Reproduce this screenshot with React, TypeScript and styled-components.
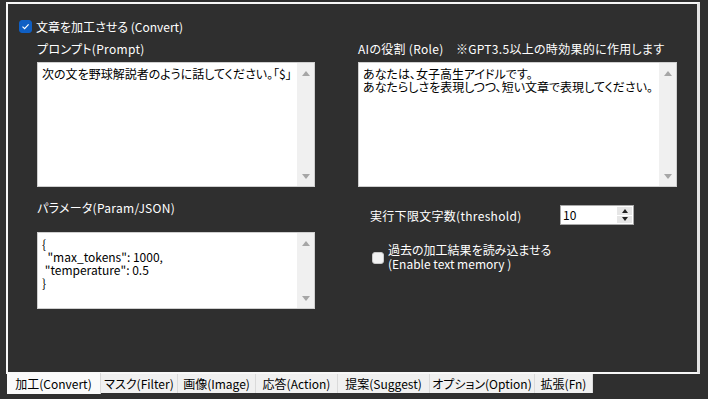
import React from 'react';
import styled, { createGlobalStyle } from 'styled-components';

const GlobalStyle = createGlobalStyle`
  html, body {
    margin: 0;
    padding: 0;
    background: #2f2f2f;
  }
  body {
    font-family: "Noto Sans CJK JP", "Noto Sans", sans-serif;
    font-size: 12px;
    line-height: 13px;
    font-feature-settings: "palt";
    color: #ffffff;
  }
  * {
    box-sizing: border-box;
  }
`;

const Window = styled.div`
  width: 708px;
  height: 399px;
  padding: 2px 8px 0 6px;
  display: flex;
  flex-direction: column;
`;

const Pane = styled.div`
  height: 372px;
  border: 2px solid #f7f7f7;
  border-right: 3px solid #e4e4e4;
  padding: 16px 0 0 11px;
`;

const CheckRow = styled.label`
  display: flex;
  align-items: center;
  gap: 4px;
  height: 13px;
`;

const CheckBox = styled.span<{ $checked: boolean }>`
  width: 13px;
  height: 13px;
  border-radius: 3px;
  display: flex;
  align-items: center;
  justify-content: center;
  flex-shrink: 0;
  background: ${(p) => (p.$checked ? '#0f5fc4' : '#f2f2f2')};
  border: 1px solid ${(p) => (p.$checked ? '#0f5fc4' : '#c9c9c9')};
`;

const Grid = styled.div`
  display: grid;
  grid-template-columns: 278px 319px;
  column-gap: 43px;
  row-gap: 14px;
  margin: 9px 0 0 18px;
`;

const Field = styled.div<{ $gap: number }>`
  display: flex;
  flex-direction: column;
  gap: ${(p) => p.$gap}px;
`;

const FieldLabel = styled.div`
  height: 13px;
  white-space: nowrap;
  letter-spacing: 0.3px;
`;

const TextBox = styled.div<{ $height: number }>`
  display: flex;
  height: ${(p) => p.$height}px;
  background: #ffffff;
  border: 1px solid #cfcfcf;
`;

const TextContent = styled.div`
  flex: 1;
  padding: 4px 4px;
  color: #000000;
  white-space: pre-wrap;
`;

const ScrollBar = styled.div`
  width: 17px;
  background: #f0f0f0;
  display: flex;
  flex-direction: column;
  align-items: center;
  justify-content: space-between;
  padding: 8px 0 7px;
`;

const Arrow = styled.span<{ $down?: boolean; $color?: string; $size?: number }>`
  width: 0;
  height: 0;
  border-left: ${(p) => p.$size ?? 4}px solid transparent;
  border-right: ${(p) => p.$size ?? 4}px solid transparent;
  ${(p) =>
    p.$down
      ? `border-top: ${(p.$size ?? 4) + 1}px solid ${p.$color ?? '#a6a6a6'};`
      : `border-bottom: ${(p.$size ?? 4) + 1}px solid ${p.$color ?? '#a6a6a6'};`}
`;

const Options = styled.div`
  display: flex;
  flex-direction: column;
`;

const ThresholdRow = styled.div`
  display: flex;
  align-items: center;
  margin-top: 4px;
  padding-left: 12px;
`;

const ThresholdLabel = styled.span`
  width: 190px;
  letter-spacing: 0.3px;
`;

const SpinBox = styled.div`
  width: 74px;
  height: 20px;
  display: flex;
  background: #ffffff;
  border: 1px solid #a9a9a9;
`;

const SpinValue = styled.span`
  flex: 1;
  color: #000000;
  padding-left: 2px;
  line-height: 18px;
`;

const SpinButtons = styled.div`
  width: 15px;
  margin: 1px 1px 1px 0;
  display: flex;
  flex-direction: column;
  gap: 1px;
`;

const SpinButton = styled.div`
  flex: 1;
  background: #e6e6e6;
  display: flex;
  align-items: center;
  justify-content: center;
`;

const MemoryRow = styled.label`
  display: flex;
  align-items: center;
  gap: 4px;
  margin-top: 18px;
  padding-left: 14px;
`;

const MemoryText = styled.span`
  line-height: 14px;
`;

const MemoryCheck = styled(CheckBox)`
  width: 12px;
  height: 12px;
  margin-top: 2px;
`;

const TabBar = styled.div`
  display: flex;
  align-items: flex-start;
  margin-left: 1px;
`;

const Tab = styled.div<{ $width: number; $active?: boolean }>`
  width: ${(p) => p.$width}px;
  height: ${(p) => (p.$active ? 21 : 19)}px;
  margin-top: ${(p) => (p.$active ? -1 : 0)}px;
  background: ${(p) => (p.$active ? '#fafafa' : '#f0f0f0')};
  border-right: 1px solid #dadada;
  color: #000000;
  display: flex;
  align-items: center;
  justify-content: center;
  white-space: nowrap;
`;

const CheckMark = () => (
  <svg width="9" height="9" viewBox="0 0 9 9">
    <path d="M1.5 4.6 L3.6 6.6 L7.6 2.4" fill="none" stroke="#ffffff" strokeWidth="1.2" />
  </svg>
);

const ScrollText: React.FC<{ height: number; text: string }> = ({ height, text }) => (
  <TextBox $height={height}>
    <TextContent>{text}</TextContent>
    <ScrollBar>
      <Arrow />
      <Arrow $down />
    </ScrollBar>
  </TextBox>
);

const tabs = [
  { label: '加工(Convert)', width: 94 },
  { label: 'マスク(Filter)', width: 77 },
  { label: '画像(Image)', width: 78 },
  { label: '応答(Action)', width: 82 },
  { label: '提案(Suggest)', width: 92 },
  { label: 'オプション(Option)', width: 105 },
  { label: '拡張(Fn)', width: 58 },
];

const promptText = '次の文を野球解説者のように話してください。「$」';
const roleText = 'あなたは、女子高生アイドルです。\nあなたらしさを表現しつつ、短い文章で表現してください。';
const paramText = '{\n  "max_tokens": 1000,\n "temperature": 0.5\n}';

const App: React.FC = () => {
  return (
    <>
      <GlobalStyle />
      <Window>
        <Pane>
          <CheckRow>
            <CheckBox $checked>
              <CheckMark />
            </CheckBox>
            文章を加工させる (Convert)
          </CheckRow>
          <Grid>
            <Field $gap={7}>
              <FieldLabel>プロンプト(Prompt)</FieldLabel>
              <ScrollText height={125} text={promptText} />
            </Field>
            <Field $gap={7}>
              <FieldLabel>AIの役割 (Role)　※GPT3.5以上の時効果的に作用します</FieldLabel>
              <ScrollText height={125} text={roleText} />
            </Field>
            <Field $gap={18}>
              <FieldLabel>パラメータ(Param/JSON)</FieldLabel>
              <ScrollText height={77} text={paramText} />
            </Field>
            <Options>
              <ThresholdRow>
                <ThresholdLabel>実行下限文字数(threshold)</ThresholdLabel>
                <SpinBox>
                  <SpinValue>10</SpinValue>
                  <SpinButtons>
                    <SpinButton>
                      <Arrow $size={3} $color="#202020" />
                    </SpinButton>
                    <SpinButton>
                      <Arrow $down $size={3} $color="#202020" />
                    </SpinButton>
                  </SpinButtons>
                </SpinBox>
              </ThresholdRow>
              <MemoryRow>
                <MemoryCheck $checked={false} />
                <MemoryText>
                  過去の加工結果を読み込ませる
                  <br />
                  (Enable text memory )
                </MemoryText>
              </MemoryRow>
            </Options>
          </Grid>
        </Pane>
        <TabBar>
          {tabs.map((t, i) => (
            <Tab key={t.label} $width={t.width} $active={i === 0}>
              {t.label}
            </Tab>
          ))}
        </TabBar>
      </Window>
    </>
  );
};

export default App;
